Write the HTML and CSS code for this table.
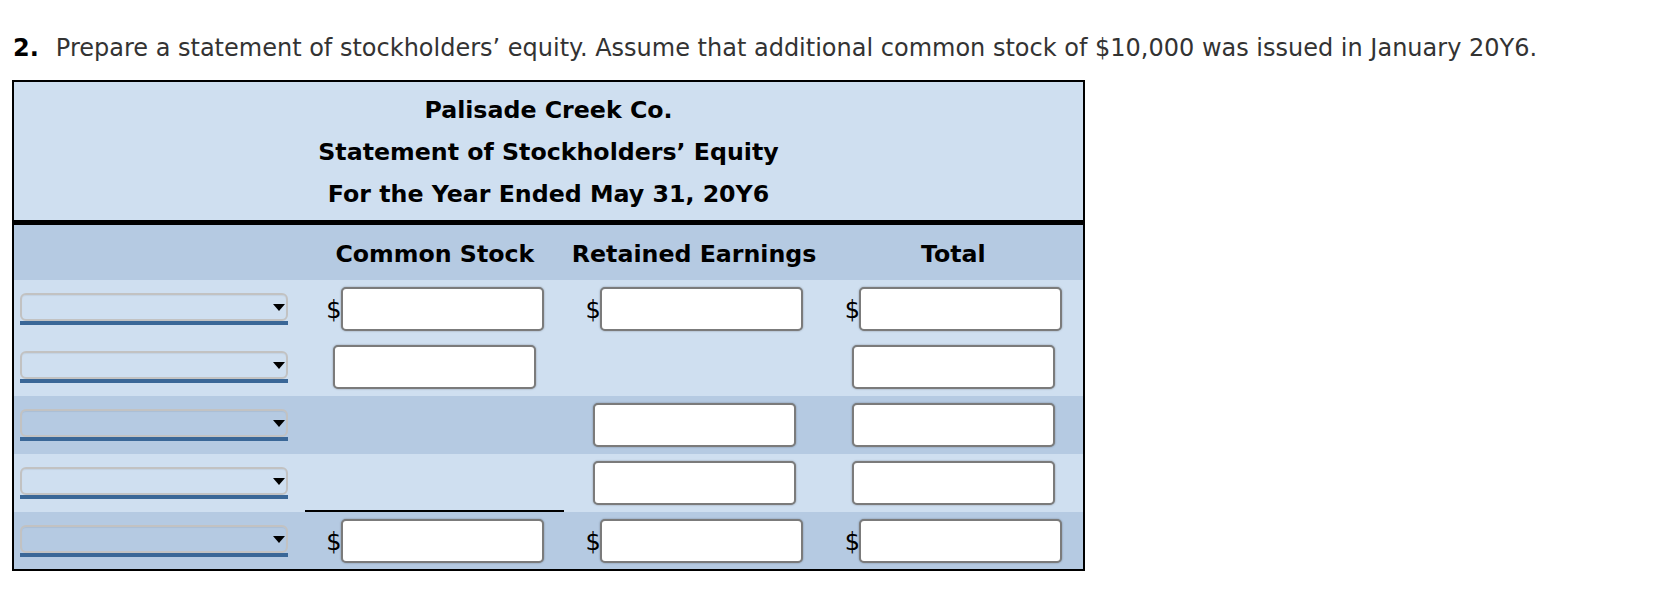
FILE: index.html
```html
<!DOCTYPE html>
<html lang="en">
<head>
<meta charset="utf-8">
<title>Statement of Stockholders’ Equity</title>
<link rel="stylesheet" href="styles.css">
</head>
<body>
<div class="page">
  <p class="question"><b class="num">2.</b>Prepare a statement of stockholders’ equity. Assume that additional common stock of $10,000 was issued in January 20Y6.</p>
  <table class="stmt">
    <colgroup>
      <col class="c-label">
      <col class="c-amt">
      <col class="c-amt">
      <col class="c-amt">
    </colgroup>
    <thead>
      <tr>
        <th colspan="4" class="heading">
          <div>Palisade Creek Co.</div>
          <div>Statement of Stockholders’ Equity</div>
          <div>For the Year Ended May 31, 20Y6</div>
        </th>
      </tr>
      <tr class="colhead dark">
        <th></th>
        <th>Common Stock</th>
        <th>Retained Earnings</th>
        <th>Total</th>
      </tr>
    </thead>
    <tbody>
      <tr class="light">
        <td class="lbl"><div class="sel"><select aria-label="Item"></select><svg class="arrow" viewBox="0 0 12 7" width="12" height="7"><polygon points="0,0 12,0 6,7"/></svg></div></td>
        <td><div class="amt"><span class="cur">$</span><input type="text"></div></td>
        <td><div class="amt"><span class="cur">$</span><input type="text"></div></td>
        <td><div class="amt"><span class="cur">$</span><input type="text"></div></td>
      </tr>
      <tr class="light">
        <td class="lbl"><div class="sel"><select aria-label="Item"></select><svg class="arrow" viewBox="0 0 12 7" width="12" height="7"><polygon points="0,0 12,0 6,7"/></svg></div></td>
        <td><div class="amt"><input type="text"></div></td>
        <td></td>
        <td><div class="amt"><input type="text"></div></td>
      </tr>
      <tr class="dark">
        <td class="lbl"><div class="sel"><select aria-label="Item"></select><svg class="arrow" viewBox="0 0 12 7" width="12" height="7"><polygon points="0,0 12,0 6,7"/></svg></div></td>
        <td></td>
        <td><div class="amt"><input type="text"></div></td>
        <td><div class="amt"><input type="text"></div></td>
      </tr>
      <tr class="light">
        <td class="lbl"><div class="sel"><select aria-label="Item"></select><svg class="arrow" viewBox="0 0 12 7" width="12" height="7"><polygon points="0,0 12,0 6,7"/></svg></div></td>
        <td class="rule"></td>
        <td><div class="amt"><input type="text"></div></td>
        <td><div class="amt"><input type="text"></div></td>
      </tr>
      <tr class="dark last">
        <td class="lbl"><div class="sel"><select aria-label="Item"></select><svg class="arrow" viewBox="0 0 12 7" width="12" height="7"><polygon points="0,0 12,0 6,7"/></svg></div></td>
        <td><div class="amt"><span class="cur">$</span><input type="text"></div></td>
        <td><div class="amt"><span class="cur">$</span><input type="text"></div></td>
        <td><div class="amt"><span class="cur">$</span><input type="text"></div></td>
      </tr>
    </tbody>
  </table>
</div>
</body>
</html>
```

FILE: styles.css
```css
html, body {
  margin: 0;
  padding: 0;
  background: #ffffff;
}

.page {
  padding: 33px 0 0 12px;
  font-family: "DejaVu Sans", Verdana, sans-serif;
}

.question {
  margin: 0 0 17px 1px;
  font-size: 24px;
  line-height: 30px;
  color: #333333;
  white-space: nowrap;
}

.question .num {
  color: #000000;
  margin-right: 17px;
}

.stmt {
  border-collapse: separate;
  border-spacing: 0;
  border: 2px solid #000000;
  table-layout: fixed;
  width: 1073px;
}

.c-label { width: 291px; }
.c-amt { width: 259px; }

.heading {
  background: #cfdff0;
  border-bottom: 5px solid #000000;
  padding: 7px 0 5px;
  font-size: 23.7px;
  line-height: 42px;
  font-weight: bold;
  color: #000000;
  text-align: center;
}

.colhead th {
  height: 55px;
  padding: 2px 0 0;
  box-sizing: border-box;
  font-size: 23.7px;
  font-weight: bold;
  color: #000000;
  text-align: center;
  vertical-align: middle;
}

.light { background: #cfdff0; }
.dark { background: #b5cae2; }

tbody td {
  height: 58px;
  padding: 0;
  box-sizing: border-box;
  vertical-align: middle;
}

tbody tr.last td { height: 57px; }

td.rule {
  border-bottom: 2px solid #000000;
}

.lbl {
  padding-left: 6px;
}

.sel {
  position: relative;
  width: 268px;
  border-bottom: 4px solid #3a6797;
  box-sizing: border-box;
}

.sel select {
  display: block;
  width: 100%;
  height: 28px;
  margin: 0;
  -webkit-appearance: none;
  appearance: none;
  background: transparent;
  border: 2px solid #c2c2c2;
  border-radius: 6px;
  box-shadow: inset 0 1px 1px rgba(0, 0, 0, 0.06);
  box-sizing: border-box;
}

.sel .arrow {
  position: absolute;
  right: 3px;
  top: 11px;
  fill: #000000;
}

.amt {
  display: flex;
  justify-content: center;
  align-items: center;
}

.cur {
  font-size: 24px;
  color: #000000;
  line-height: 1;
  padding-top: 2px;
  margin-right: -1px;
}

.amt input {
  width: 203px;
  height: 44px;
  margin: 0;
  padding: 0 6px;
  box-sizing: border-box;
  border: 2px solid #7b7b7b;
  border-radius: 5px;
  background: #ffffff;
  box-shadow: 0 0 2px rgba(0, 0, 0, 0.35);
  font-family: "DejaVu Sans", Verdana, sans-serif;
  font-size: 18px;
}
```
